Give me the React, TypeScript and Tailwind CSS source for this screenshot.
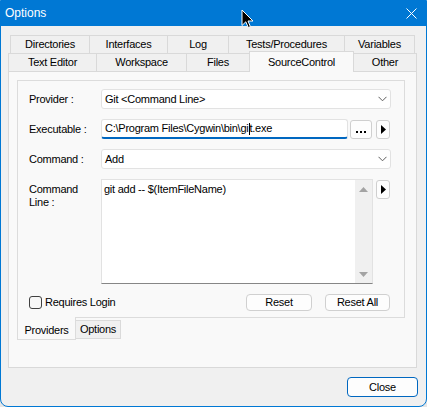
import React from "react";

function Chevron() {
  return (
    <svg width="9" height="6" viewBox="0 0 9 6" className="shrink-0">
      <path d="M0.5 0.8 L4.5 4.8 L8.5 0.8" fill="none" stroke="#5f5f5f" strokeWidth="1" />
    </svg>
  );
}

function RightTri() {
  return (
    <svg width="5" height="9" viewBox="0 0 5 9">
      <polygon points="0,0 5,4.5 0,9" fill="#000" />
    </svg>
  );
}

function Combo({ text }: { text: string }) {
  return (
    <div className="w-[290px] h-[20px] border border-[#e2e2e2] rounded-[3px] bg-white flex items-center justify-between pl-[3px] pr-[3px]">
      <span>{text}</span>
      <Chevron />
    </div>
  );
}

function SmallBtn({ children, w }: { children: React.ReactNode; w: string }) {
  return (
    <div className={`${w} h-[19px] border border-[#cfcfcf] rounded-[3px] bg-[#fdfdfd] flex items-center justify-center`}>
      {children}
    </div>
  );
}

export default function App() {
  return (
    <div className="relative w-[427px] h-[407px] bg-[#e6e6e6] font-['Liberation_Sans',Arial,sans-serif] text-[11px] leading-[13px] tracking-[-0.25px] text-black select-none">
      <div className="w-full h-full flex flex-col bg-[#f0f0f0] border border-[#0078d4] rounded-b-[8px] overflow-hidden">
        {/* Title bar */}
        <div className="h-[25px] shrink-0 bg-[#0078d4] flex items-center justify-between pl-[4px] pr-[9px]">
          <span className="text-white text-[12px] tracking-normal">Options</span>
          <svg width="11" height="11" viewBox="0 0 11 11">
            <path d="M0.5 0.5 L10.5 10.5 M10.5 0.5 L0.5 10.5" stroke="#fff" strokeWidth="1" />
          </svg>
        </div>

        {/* Body */}
        <div className="flex flex-col pl-[7px] pt-[9px]">
          {/* Tab row 1 */}
          <div className="flex ml-[2px] h-[18px]">
            <div className="w-[79px] h-[18px] border-t border-l border-[#d9d9d9] bg-[#f0f0f0] flex items-center justify-center">Directories</div>
            <div className="w-[78px] h-[18px] border-t border-l border-[#d9d9d9] bg-[#f0f0f0] flex items-center justify-center">Interfaces</div>
            <div className="w-[61px] h-[18px] border-t border-l border-[#d9d9d9] bg-[#f0f0f0] flex items-center justify-center">Log</div>
            <div className="w-[116px] h-[18px] border-t border-l border-[#d9d9d9] bg-[#f0f0f0] flex items-center justify-center">Tests/Procedures</div>
            <div className="w-[71px] h-[18px] border-t border-l border-r border-[#d9d9d9] bg-[#f0f0f0] flex items-center justify-center">Variables</div>
          </div>
          {/* Tab row 2 */}
          <div className="flex items-end h-[18px]">
            <div className="w-[88px] h-[18px] border-t border-l border-[#d9d9d9] bg-[#f0f0f0] flex items-center justify-center">Text Editor</div>
            <div className="w-[90px] h-[18px] border-t border-l border-[#d9d9d9] bg-[#f0f0f0] flex items-center justify-center">Workspace</div>
            <div className="w-[63px] h-[18px] border-t border-l border-[#d9d9d9] bg-[#f0f0f0] flex items-center justify-center">Files</div>
            <div className="relative z-10 w-[105px] h-[21px] mb-[-1px] border-t border-l border-r border-[#d9d9d9] bg-[#f9f9f9] flex items-start justify-center pt-[4px]">SourceControl</div>
            <div className="w-[63px] h-[18px] border-t border-r border-[#d9d9d9] bg-[#f0f0f0] flex items-center justify-center">Other</div>
          </div>

          {/* Outer tab page */}
          <div className="w-[409px] h-[297px] border border-[#d9d9d9] bg-[#f9f9f9] pl-[8px] pt-[8px] flex flex-col">
            {/* Inner page */}
            <div className="w-[388px] h-[238px] border border-[#dcdcdc] bg-[#f9f9f9] pt-[8px] pl-[11px] pr-[13px] flex flex-col">
              {/* Provider */}
              <div className="flex items-center h-[20px]">
                <div className="w-[72px]">Provider :</div>
                <Combo text="Git <Command Line>" />
              </div>
              {/* Executable */}
              <div className="flex items-center h-[20px] mt-[10px]">
                <div className="w-[72px]">Executable :</div>
                <div className="w-[247px] h-[20px] bg-white border border-[#e2e2e2] border-b-2 border-b-[#0067c0] rounded-[3px] pl-[3px] flex items-center">
                  <span>C:\Program Files\Cygwin\bin\gi</span>
                  <span className="inline-block w-px h-[12px] bg-black"></span>
                  <span>t.exe</span>
                </div>
                <div className="ml-[2px]">
                  <SmallBtn w="w-[22px]">
                    <div className="flex gap-[2px] mt-[6px]">
                      <span className="block w-[2px] h-[2px] bg-black"></span>
                      <span className="block w-[2px] h-[2px] bg-black"></span>
                      <span className="block w-[2px] h-[2px] bg-black"></span>
                    </div>
                  </SmallBtn>
                </div>
                <div className="ml-[4px]">
                  <SmallBtn w="w-[14px]">
                    <RightTri />
                  </SmallBtn>
                </div>
              </div>
              {/* Command */}
              <div className="flex items-center h-[20px] mt-[10px]">
                <div className="w-[72px]">Command :</div>
                <Combo text="Add" />
              </div>
              {/* Command Line */}
              <div className="flex items-start h-[105px] mt-[10px]">
                <div className="w-[72px] pt-[4px]">
                  Command
                  <br />
                  Line :
                </div>
                <div className="w-[272px] h-[105px] bg-white border border-[#e2e2e2] border-b-[#868686] flex">
                  <div className="flex-1 pl-[2px] pt-[3px]">git add -- $(ItemFileName)</div>
                  <div className="w-[17px] bg-[#f0f0f0] flex flex-col items-center justify-between pt-[7px] pb-[6px]">
                    <svg width="9" height="5" viewBox="0 0 9 5">
                      <polygon points="0,5 4.5,0 9,5" fill="#a3a3a3" />
                    </svg>
                    <svg width="9" height="5" viewBox="0 0 9 5">
                      <polygon points="0,0 9,0 4.5,5" fill="#a3a3a3" />
                    </svg>
                  </div>
                </div>
                <div className="ml-[3px] mt-[1px]">
                  <SmallBtn w="w-[14px]">
                    <RightTri />
                  </SmallBtn>
                </div>
              </div>
              {/* Bottom row */}
              <div className="flex items-center justify-between h-[17px] mt-[10px] pr-[1px]">
                <div className="flex items-center">
                  <div className="w-[13px] h-[13px] border border-[#404040] rounded-[3px] bg-[#f7f7f7]"></div>
                  <span className="ml-[3px]">Requires Login</span>
                </div>
                <div className="flex gap-[13px]">
                  <div className="w-[66px] h-[17px] border border-[#d0d0d0] rounded-[4px] bg-[#fdfdfd] flex items-center justify-center">Reset</div>
                  <div className="w-[65px] h-[17px] border border-[#d0d0d0] rounded-[4px] bg-[#fdfdfd] flex items-center justify-center">Reset All</div>
                </div>
              </div>
            </div>
            {/* Inner tabs */}
            <div className="flex items-start">
              <div className="relative z-10 w-[59px] h-[23px] mt-[-1px] border-l border-r border-b border-[#dcdcdc] bg-[#f9f9f9] flex items-start justify-center pt-[7px]">Providers</div>
              <div className="w-[45px] h-[19px] mt-[2px] border-t border-r border-b border-[#dadada] bg-[#f0f0f0] flex items-center justify-center">Options</div>
            </div>
          </div>

          {/* Close row */}
          <div className="flex justify-end pr-[8px] pt-[9px]">
            <div className="w-[71px] h-[20px] border border-[#0067c0] rounded-[4px] bg-[#fdfdfd] flex items-center justify-center">Close</div>
          </div>
        </div>
      </div>

      {/* Mouse cursor */}
      <svg className="absolute left-[241px] top-[9px]" width="13" height="20" viewBox="0 0 13 20">
        <path d="M1 1 L1 16.5 L4.8 12.8 L7.3 18.5 L9.4 17.6 L7 12 L12 12 Z" fill="#000" stroke="#fff" strokeWidth="1" strokeLinejoin="round" />
      </svg>
    </div>
  );
}
